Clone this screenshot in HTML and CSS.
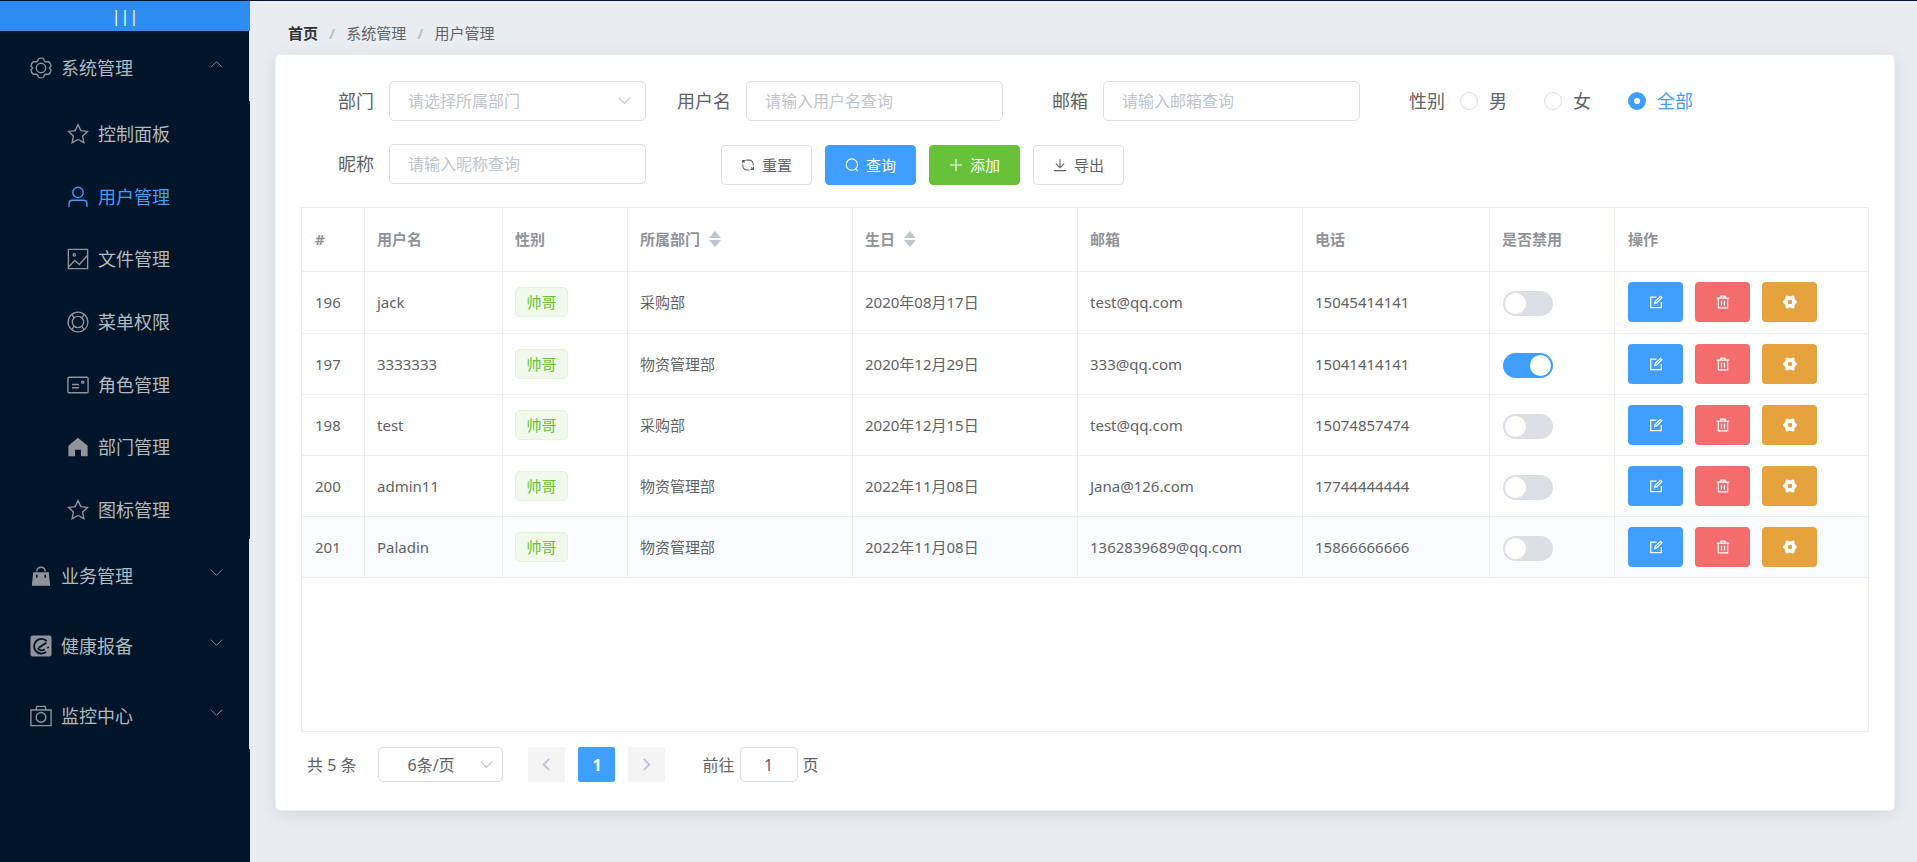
FILE: index.html
```html
<!DOCTYPE html>
<html lang="zh-CN">
<head>
<meta charset="utf-8">
<title>用户管理</title>
<link rel="stylesheet" href="styles.css">
</head>
<body>
<svg class="sprite" aria-hidden="true">
  <symbol id="i-setting" viewBox="0 0 24 24"><path d="M9.300 1.900q2.700-1.400 5.400 0l1 2.400 1.900 1.100 2.700-.4q2.400 1.700 2.700 4.800L21.200 12l1.800 2.200q-.3 3.100-2.700 4.800l-2.700-.4-1.900 1.100-1 2.400q-2.700 1.400-5.400 0l-1-2.400-1.900-1.100-2.700.4Q1.300 17.300 1 14.200L2.800 12 1 9.800Q1.300 6.700 3.700 5l2.700.4 1.900-1.100z"/><circle cx="12" cy="12" r="5.200"/></symbol>
  <symbol id="i-star" viewBox="0 0 24 24"><path d="M12 1.800l3.100 6.500 7.200.9-5.300 4.900 1.400 7.400L12 18l-6.400 3.500L7 14.100 1.700 9.200l7.200-.9z"/></symbol>
  <symbol id="i-user" viewBox="0 0 24 24"><circle cx="12" cy="7" r="5.700"/><path d="M2.200 23v-3.500q0-4 4-4h11.600q4 0 4 4V23"/></symbol>
  <symbol id="i-picture" viewBox="0 0 24 24"><path d="M1.500 1.500h21v21h-21z"/><path d="M2 20.500l6.500-7 5 4.500 8.500-9.500"/><circle cx="8" cy="7.500" r="1.300"/></symbol>
  <symbol id="i-help" viewBox="0 0 24 24"><circle cx="12" cy="12" r="10.800"/><circle cx="12" cy="12" r="6.200"/><path d="M5.500 3.500q1 2.500 2.500 4M18.500 3.500q-1 2.500-2.500 4M5.500 20.500q1-2.500 2.500-4M18.500 20.500q-1-2.500-2.500-4"/></symbol>
  <symbol id="i-postcard" viewBox="0 0 24 24"><rect x="1" y="3.500" width="22" height="17" rx="1.500"/><path d="M5.500 11.500h7.500M5.500 15h7.500"/><circle cx="17.200" cy="9" r="1.200"/></symbol>
  <symbol id="i-home" viewBox="0 0 24 24"><path class="solid" d="M12 2l10.500 8.500V22h-7.300v-7H8.800v7H1.500V10.500z"/></symbol>
  <symbol id="i-goods" viewBox="0 0 24 24"><path class="solid" fill-rule="evenodd" d="M3.500 8h17l1.500 14.500H2zM6.500 10.500v3.500h1.800v-3.500zM15.700 10.500v3.500h1.800v-3.500z"/><path d="M7.500 7V6q.5-3.500 4.500-3.500T16.500 6v1"/></symbol>
  <symbol id="i-eleme" viewBox="0 0 24 24"><rect class="solid" x=".5" y=".5" width="23" height="23" rx="2.500"/><path class="cut" d="M18.300 6.800a8 8 0 1 0-1 11.800M9.500 14l8.300-5.500M16 15.500a5 5 0 0 1-7.500-1"/><path class="cut" d="M19.300 13l.6 1.400"/></symbol>
  <symbol id="i-camera" viewBox="0 0 24 24"><path d="M1 5.500h22v17H1zM6.500 5.500l1-4h9l1 4"/><circle cx="12" cy="13.500" r="5.300"/></symbol>
  <symbol id="i-down" viewBox="0 0 16 16"><path d="M2 5l6 6 6-6"/></symbol>
  <symbol id="i-up" viewBox="0 0 16 16"><path d="M2 11l6-6 6 6"/></symbol>
  <symbol id="i-left" viewBox="0 0 16 16"><path d="M11 2L5 8l6 6"/></symbol>
  <symbol id="i-right" viewBox="0 0 16 16"><path d="M5 2l6 6-6 6"/></symbol>
  <symbol id="i-refresh" viewBox="0 0 16 16"><path d="M6 2.400h3.500A4.500 4.500 0 0 1 14 7v1.500M2 7.500V9a4.500 4.500 0 0 0 4.500 4.600H10M1.800 6.300V3h3.500M14.200 9.700V13h-3.500M2.200 3.200l2 2M13.800 12.800l-2-2"/></symbol>
  <symbol id="i-search" viewBox="0 0 16 16"><circle cx="7.800" cy="7.500" r="6.500"/><path d="M11.800 12.200l2.900 2.900"/></symbol>
  <symbol id="i-plus" viewBox="0 0 16 16"><path d="M8 1v14M1 8h14"/></symbol>
  <symbol id="i-download" viewBox="0 0 16 16"><path d="M8 1.500v9.500M3.300 6.500L8 11.200l4.700-4.700M1 14.400h14"/></symbol>
  <symbol id="i-edit" viewBox="0 0 16 16"><path d="M8.500 2.300H2v12h12V8"/><path d="M6.500 9.800l.6-2.300 6-6 1.600 1.600-6 6z"/></symbol>
  <symbol id="i-delete" viewBox="0 0 16 16"><path d="M.8 3.500h14.400M5.500 3V1.200h5V3M2.700 4v10.800h10.600V4M6.300 6.500v5.500M9.700 6.500v5.500"/></symbol>
  <symbol id="i-tools" viewBox="0 0 16 16"><circle class="ring" cx="8" cy="8" r="4.600"/><path class="teeth" d="M13 8h1M2 8h1M10.600 3.500l.6-.9M5.400 12.500l-.6.900M5.400 3.500l-.6-.9M10.600 12.500l.6.900"/></symbol>
</svg>
<div class="app">
  <aside class="sidebar">
    <button class="toggle" type="button" aria-label="折叠菜单"><span>|</span><span>|</span><span>|</span></button>
    <nav>
      <ul class="menu">
        <li>
          <a class="menu-title" href="#"><svg class="ico"><use href="#i-setting"/></svg><span>系统管理</span><svg class="arrow"><use href="#i-up"/></svg></a>
          <ul class="submenu">
            <li><a href="#"><svg class="ico"><use href="#i-star"/></svg><span>控制面板</span></a></li>
            <li><a class="active" href="#"><svg class="ico"><use href="#i-user"/></svg><span>用户管理</span></a></li>
            <li><a href="#"><svg class="ico"><use href="#i-picture"/></svg><span>文件管理</span></a></li>
            <li><a href="#"><svg class="ico"><use href="#i-help"/></svg><span>菜单权限</span></a></li>
            <li><a href="#"><svg class="ico"><use href="#i-postcard"/></svg><span>角色管理</span></a></li>
            <li><a href="#"><svg class="ico"><use href="#i-home"/></svg><span>部门管理</span></a></li>
            <li><a href="#"><svg class="ico"><use href="#i-star"/></svg><span>图标管理</span></a></li>
          </ul>
        </li>
        <li><a class="menu-title" href="#"><svg class="ico"><use href="#i-goods"/></svg><span>业务管理</span><svg class="arrow"><use href="#i-down"/></svg></a></li>
        <li><a class="menu-title" href="#"><svg class="ico"><use href="#i-eleme"/></svg><span>健康报备</span><svg class="arrow"><use href="#i-down"/></svg></a></li>
        <li><a class="menu-title" href="#"><svg class="ico"><use href="#i-camera"/></svg><span>监控中心</span><svg class="arrow"><use href="#i-down"/></svg></a></li>
      </ul>
    </nav>
  </aside>
  <main class="content">
    <nav class="breadcrumb">
      <a class="home" href="#">首页</a><i>/</i><span>系统管理</span><i>/</i><span>用户管理</span>
    </nav>
    <section class="card">
      <form class="filters">
        <div class="row">
          <div class="field"><label for="dept">部门</label><div class="select"><select id="dept"><option>请选择所属部门</option></select><svg><use href="#i-down"/></svg></div></div>
          <div class="field"><label for="uname">用户名</label><input class="text" id="uname" type="text" placeholder="请输入用户名查询"></div>
          <div class="field"><label for="mail">邮箱</label><input class="text" id="mail" type="text" placeholder="请输入邮箱查询"></div>
          <div class="field"><span class="label">性别</span>
            <div class="radios">
              <label><input type="radio" name="sex">男</label>
              <label><input type="radio" name="sex">女</label>
              <label class="on"><input type="radio" name="sex" checked>全部</label>
            </div>
          </div>
        </div>
        <div class="row">
          <div class="field"><label for="nick">昵称</label><input class="text" id="nick" type="text" placeholder="请输入昵称查询"></div>
          <div class="actions">
            <button class="btn" type="reset"><svg><use href="#i-refresh"/></svg>重置</button>
            <button class="btn primary" type="button"><svg><use href="#i-search"/></svg>查询</button>
            <button class="btn success" type="button"><svg><use href="#i-plus"/></svg>添加</button>
            <button class="btn" type="button"><svg><use href="#i-download"/></svg>导出</button>
          </div>
        </div>
      </form>
      <div class="table-box">
        <table>
          <colgroup><col class="c-id"><col class="c-name"><col class="c-sm"><col class="c-lg"><col class="c-lg"><col class="c-lg"><col class="c-tel"><col class="c-sm"><col></colgroup>
          <thead>
            <tr><th>#</th><th>用户名</th><th>性别</th><th>所属部门<svg class="sort" viewBox="0 0 12 16"><path d="M0 7l6-7 6 7zM0 9h12l-6 7z"/></svg></th><th>生日<svg class="sort" viewBox="0 0 12 16"><path d="M0 7l6-7 6 7zM0 9h12l-6 7z"/></svg></th><th>邮箱</th><th>电话</th><th>是否禁用</th><th>操作</th></tr>
          </thead>
          <tbody>
            <tr><td>196</td><td>jack</td><td><span class="tag">帅哥</span></td><td>采购部</td><td>2020年08月17日</td><td>test@qq.com</td><td>15045414141</td><td><input class="switch" type="checkbox" role="switch" aria-label="禁用 jack"></td><td><div class="ops"><button class="op edit" type="button" aria-label="编辑"><svg><use href="#i-edit"/></svg></button><button class="op del" type="button" aria-label="删除"><svg><use href="#i-delete"/></svg></button><button class="op set" type="button" aria-label="分配角色"><svg><use href="#i-tools"/></svg></button></div></td></tr>
            <tr><td>197</td><td>3333333</td><td><span class="tag">帅哥</span></td><td>物资管理部</td><td>2020年12月29日</td><td>333@qq.com</td><td>15041414141</td><td><input class="switch" type="checkbox" role="switch" aria-label="禁用 3333333" checked></td><td><div class="ops"><button class="op edit" type="button" aria-label="编辑"><svg><use href="#i-edit"/></svg></button><button class="op del" type="button" aria-label="删除"><svg><use href="#i-delete"/></svg></button><button class="op set" type="button" aria-label="分配角色"><svg><use href="#i-tools"/></svg></button></div></td></tr>
            <tr><td>198</td><td>test</td><td><span class="tag">帅哥</span></td><td>采购部</td><td>2020年12月15日</td><td>test@qq.com</td><td>15074857474</td><td><input class="switch" type="checkbox" role="switch" aria-label="禁用 test"></td><td><div class="ops"><button class="op edit" type="button" aria-label="编辑"><svg><use href="#i-edit"/></svg></button><button class="op del" type="button" aria-label="删除"><svg><use href="#i-delete"/></svg></button><button class="op set" type="button" aria-label="分配角色"><svg><use href="#i-tools"/></svg></button></div></td></tr>
            <tr><td>200</td><td>admin11</td><td><span class="tag">帅哥</span></td><td>物资管理部</td><td>2022年11月08日</td><td>Jana@126.com</td><td>17744444444</td><td><input class="switch" type="checkbox" role="switch" aria-label="禁用 admin11"></td><td><div class="ops"><button class="op edit" type="button" aria-label="编辑"><svg><use href="#i-edit"/></svg></button><button class="op del" type="button" aria-label="删除"><svg><use href="#i-delete"/></svg></button><button class="op set" type="button" aria-label="分配角色"><svg><use href="#i-tools"/></svg></button></div></td></tr>
            <tr class="hover"><td>201</td><td>Paladin</td><td><span class="tag">帅哥</span></td><td>物资管理部</td><td>2022年11月08日</td><td>1362839689@qq.com</td><td>15866666666</td><td><input class="switch" type="checkbox" role="switch" aria-label="禁用 Paladin"></td><td><div class="ops"><button class="op edit" type="button" aria-label="编辑"><svg><use href="#i-edit"/></svg></button><button class="op del" type="button" aria-label="删除"><svg><use href="#i-delete"/></svg></button><button class="op set" type="button" aria-label="分配角色"><svg><use href="#i-tools"/></svg></button></div></td></tr>
          </tbody>
        </table>
      </div>
      <div class="pagination">
        <span class="total">共 5 条</span>
        <div class="select size"><select aria-label="每页条数"><option>6条/页</option></select><svg><use href="#i-down"/></svg></div>
        <div class="pager">
          <button type="button" aria-label="上一页" disabled><svg><use href="#i-left"/></svg></button>
          <button class="current" type="button">1</button>
          <button type="button" aria-label="下一页" disabled><svg><use href="#i-right"/></svg></button>
        </div>
        <label class="jump">前往<input type="text" value="1">页</label>
      </div>
    </section>
  </main>
</div>
</body>
</html>
```

FILE: styles.css
```css
* { box-sizing: border-box; }
body { margin: 0; font-family: "Noto Sans", "Noto Sans CJK SC", sans-serif; font-size: 15px; line-height: 24px; color: #606266; background: #e9edf1; }
button, input, select { font: inherit; color: inherit; margin: 0; }
button { cursor: pointer; padding: 0; border: 0; }
a { color: inherit; text-decoration: none; }
ul { list-style: none; margin: 0; padding: 0; }
svg { fill: none; stroke: currentColor; flex: none; }
.sprite { position: absolute; width: 0; height: 0; }
.solid { fill: currentColor; stroke: none; }
.cut { stroke: #001529; stroke-width: 2; }
.ring { stroke-width: 4; }
.teeth { stroke-width: 4; stroke-linecap: round; }

.app { display: flex; min-height: 100vh; border-top: 1px solid #001529; }

.sidebar { flex: none; width: 250px; background: #001529; }
.toggle { display: flex; justify-content: center; align-items: center; width: 100%; height: 30px; background: #2d8cf0; color: #fff; font-size: 16px; }
.menu { font-size: 18px; color: #b3b9be; }
.menu a { display: flex; align-items: center; gap: 9px; }
.menu-title { height: 70px; padding: 4px 25px 0 30px; border-right: 1px solid #e6e6e6; }
.submenu { display: grid; align-content: space-between; min-height: 438px; }
.submenu a { height: 62px; padding: 4px 0 0 67px; }
.ico { width: 22px; height: 22px; color: #909399; stroke-width: 1.5; }
.menu .active, .active .ico { color: #409eff; }
.arrow { width: 15px; height: 15px; margin: 0 0 8px auto; color: #909399; }

.content { flex: 1; min-width: 0; padding: 0 22px 40px 25px; }
.breadcrumb { display: flex; height: 53px; padding: 20px 0 0 13px; }
.breadcrumb i { margin: 0 11px; font-style: normal; font-weight: 700; color: #c0c4cc; }
.home { font-weight: 700; color: #303133; }
.card { padding: 26px 25px 28px; border: 1px solid #ebeef5; border-radius: 5px; background: #fff; box-shadow: 0 3px 15px rgba(0, 0, 0, .1); }

.filters { display: grid; gap: 23px; padding-bottom: 22px; }
.row { display: flex; }
.field { display: flex; margin-right: 12px; }
.field > label, .label { width: 88px; padding-right: 15px; text-align: right; font-size: 18px; line-height: 40px; }
.text, .select select { width: 257px; height: 40px; padding: 0 18px; border: 1px solid #dcdfe6; border-radius: 5px; background: #fff; font-size: 16px; outline: 0; }
.text::placeholder { color: #c0c4cc; opacity: 1; }
.select { position: relative; }
.select select { appearance: none; color: #c0c4cc; }
.select svg { position: absolute; right: 14px; top: 12px; width: 15px; height: 15px; color: #c0c4cc; stroke-width: 1.3; pointer-events: none; }
.radios { display: flex; gap: 37px; }
.radios label { display: flex; align-items: center; gap: 11px; height: 40px; font-size: 18px; }
.radios input { appearance: none; width: 18px; height: 18px; border: 1px solid #dcdfe6; border-radius: 50%; background: #fff; }
.radios input:checked { border: 6px solid #409eff; }
.radios .on { color: #409eff; }
.actions { display: flex; gap: 13px; margin: 1px 0 0 63px; }
.btn { display: flex; align-items: center; justify-content: center; gap: 7px; width: 91px; height: 40px; border: 1px solid #dcdfe6; border-radius: 4px; background: #fff; }
.btn svg { width: 14px; height: 14px; stroke-width: 1.2; }
.primary { background: #409eff; border-color: #409eff; color: #fff; }
.success { background: #67c23a; border-color: #67c23a; color: #fff; }

.table-box { min-height: 525px; border: 1px solid #ebeef5; }
table { width: 100%; table-layout: fixed; border-collapse: separate; border-spacing: 0; }
.c-id { width: 63px; }
.c-name { width: 138px; }
.c-sm { width: 125px; }
.c-lg { width: 225px; }
.c-tel { width: 187px; }
th, td { height: 61px; padding: 0 12px 1px; border-right: 1px solid #ebeef5; border-bottom: 1px solid #ebeef5; text-align: left; vertical-align: middle; }
th { height: 64px; font-weight: 700; color: #909399; }
tbody tr:first-child td { height: 62px; }
th:first-child, td:first-child, th:last-child, td:last-child { padding-left: 13px; }
th:last-child, td:last-child { border-right: 0; }
.sort { width: 12px; height: 16px; margin-left: 9px; vertical-align: -2px; fill: #c0c4cc; stroke: none; }
.hover td { background: #fafcff; }
.tag { display: block; width: 53px; height: 30px; border: 1px solid #e1f3d8; border-radius: 5px; background: #f0f9eb; color: #67c23a; text-align: center; line-height: 28px; }
.switch { display: block; appearance: none; width: 50px; height: 25px; padding: 2px; margin: 3px 0 0 1px; border-radius: 13px; background: #dcdfe6; }
.switch::before { content: ""; display: block; width: 21px; height: 21px; border-radius: 50%; background: #fff; }
.switch:checked { background: #409eff; }
.switch:checked::before { margin-left: auto; }
.ops { display: flex; gap: 12px; }
.op { display: flex; align-items: center; justify-content: center; width: 55px; height: 40px; border-radius: 4px; color: #fff; }
.op svg { width: 14px; height: 14px; stroke-width: 1.4; }
.edit { background: #409eff; }
.del { background: #f56c6c; }
.set { background: #e6a23c; }

.pagination { display: flex; align-items: center; padding: 15px 0 0 6px; font-size: 16px; }
.total { margin-right: 22px; }
.size { margin-right: 25px; }
.size select { display: block; width: 125px; height: 35px; padding: 0 28px; color: #606266; }
.size svg { right: 9px; top: 10px; }
.pager { display: flex; gap: 13px; margin-right: 37px; }
.pager button { display: flex; align-items: center; justify-content: center; width: 37px; height: 35px; border-radius: 2px; background: #f4f4f5; color: #c0c4cc; font-weight: 700; }
.pager svg { width: 15px; height: 15px; stroke-width: 2; }
.pager .current { background: #409eff; color: #fff; }
.jump { display: flex; align-items: center; gap: 5px; }
.jump input { width: 58px; height: 35px; padding: 0; border: 1px solid #dcdfe6; border-radius: 5px; text-align: center; }
```
